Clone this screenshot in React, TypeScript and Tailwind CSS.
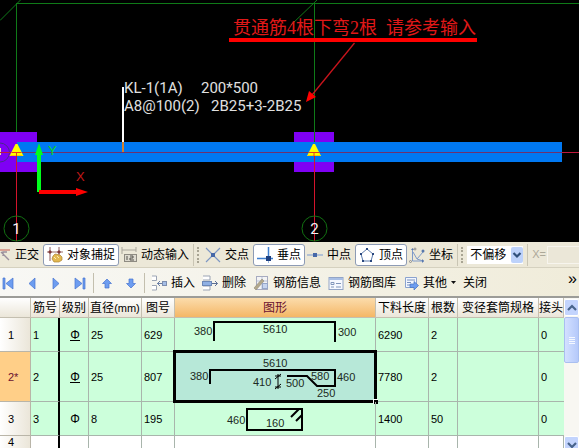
import type { ReactNode } from "react";

const UI_FONT = "font-['Liberation_Sans','Noto_Sans_CJK_SC',sans-serif]";

/* ---------- drawing area ---------- */

function AxisBubble({ x, label }: { x: number; label: string }) {
  return (
    <g>
      <line x1={x} x2={x} y1="152" y2="241" stroke="#d4142c" />
      <circle cx={x} cy="228.5" r="12.5" fill="none" stroke="#127012" />
      <text x={x} y="234" fontSize="15" fill="#f2f2f2" textAnchor="middle" className="font-[Roboto,sans-serif]">
        {label}
      </text>
    </g>
  );
}

function Support({ x }: { x: number }) {
  return (
    <g>
      <path d={`M${x - 7} 156 L${x - 1} 144 H${x + 1} L${x + 7} 156 Z`} fill="#ffff00" />
      <path d={`M${x - 6} 155.5 H${x + 6}`} stroke="#ffc800" />
      <path d={`M${x - 5} 152.5 H${x + 5} M${x} 152 V156`} stroke="#e04020" />
    </g>
  );
}

function BeamCanvas() {
  return (
    <svg className="block h-[242px] w-full shrink-0 bg-black" role="img" aria-label="梁平面图">
      <g stroke="#0f7a18" fill="none">
        <path d="M0 20.5 L20.5 0" />
        <path d="M291 25 L317 0" />
        <line x1="17" x2="100%" y1="3.5" y2="3.5" />
        <line x1="16.5" x2="16.5" y1="3" y2="146" />
        <line x1="314.5" x2="314.5" y1="3" y2="146" />
      </g>
      <g fill="#7f00f4">
        <rect x="0" y="132" width="37" height="40" />
        <rect x="294" y="132" width="40" height="40" />
      </g>
      <rect x="17" y="142" width="545" height="20" fill="#0078f2" />
      <circle cx="0" cy="152.5" r="9.5" fill="none" stroke="#4a2a8a" />
      <rect x="0" y="148" width="1" height="7" fill="#e8e0a0" />
      <line x1="0" x2="100%" y1="152.5" y2="152.5" stroke="#c0183c" />
      <line x1="17" x2="562" y1="152.5" y2="152.5" stroke="#70306c" />
      <line x1="314.5" x2="314.5" y1="132" y2="142" stroke="#0f7a18" />
      <AxisBubble x={16.5} label="1" />
      <AxisBubble x={314.5} label="2" />
      <Support x={16.5} />
      <Support x={314} />

      <rect x="122" y="87" width="2" height="55" fill="#fff" />
      <rect x="122" y="142" width="2" height="10" fill="#d08030" />
      <g fontSize="15" fill="#e0e0e0" className="font-[Roboto,sans-serif]">
        <text x="124" y="93">KL-1(1A)</text>
        <text x="201" y="93">200*500</text>
        <text x="124" y="111">A8@100(2)</text>
        <text x="211" y="111">2B25+3-2B25</text>
      </g>

      <rect x="37" y="154" width="4" height="38" fill="#00ff1c" />
      <path d="M39 143 L43 155 H35 Z" fill="#00ff1c" />
      <rect x="39" y="190" width="38" height="4" fill="#f00" />
      <path d="M88 192 L76 188 V196 Z" fill="#f00" />
      <g fontSize="13" className="font-['Liberation_Sans',sans-serif]">
        <text x="48" y="155" fill="#10d820">Y</text>
        <text x="76" y="181" fill="#c01818">X</text>
      </g>

      <text y="34" fontSize="18" fill="#e01818" className="font-['Liberation_Serif','Noto_Sans_CJK_SC',serif]">
        <tspan x="233">贯通筋4根下弯2根 </tspan>
        <tspan x="386">请参考输入</tspan>
      </text>
      <rect x="229" y="38" width="248" height="4" fill="#f00" />
      <path d="M354.5 43 L312 95" stroke="#c8141c" strokeWidth="1.3" />
      <path d="M306 102 L309 91 L316 97 Z" fill="#f00" />
    </svg>
  );
}

/* ---------- toolbars ---------- */

function Icon({ children }: { children: ReactNode }) {
  return (
    <svg className="h-4 w-4 shrink-0" viewBox="0 0 16 16" fill="none" aria-hidden="true">
      {children}
    </svg>
  );
}

function SnapButton({ label, icon, pressed = false }: { label: string; icon: ReactNode; pressed?: boolean }) {
  return (
    <button
      type="button"
      aria-pressed={pressed}
      className={
        pressed
          ? "ml-[2px] flex h-[22px] shrink-0 items-center gap-1 rounded-[3px] border border-[#8d9bb5] bg-white px-[3px] whitespace-nowrap"
          : "flex h-[22px] shrink-0 items-center gap-1 px-[2px] whitespace-nowrap"
      }
    >
      <Icon>{icon}</Icon>
      {label}
    </button>
  );
}

function Grip() {
  return (
    <div className="mr-1 ml-[2px] flex h-[22px] shrink-0 items-center border-l border-[#c9c5b4] pl-[3px]">
      <div className="h-4 w-[2px] border-l-2 border-dotted border-[#a8a493]" />
    </div>
  );
}

function SnapToolbar() {
  return (
    <div className="flex h-[26px] shrink-0 items-center overflow-hidden border-b border-[#d5d1bf] bg-[#ece8d8]">
      <div className="-ml-[7px] flex shrink-0">
        <SnapButton
          label="正交"
          icon={
            <>
              <path d="M3 3H15" stroke="#d9a294" strokeWidth="2" />
              <path d="M6 5L14 13M8 9V5H12" stroke="#9a8f9c" strokeWidth="1.4" />
            </>
          }
        />
        <SnapButton
          label="对象捕捉"
          pressed
          icon={
            <>
              <path d="M3 0V14M12 0V8" stroke="#8c5a5a" />
              <path d="M0 5H16" stroke="#9c7068" />
              <path d="M1 5L3 3L5 5L3 7ZM10 5L12 3L14 5L12 7Z" fill="#803838" />
              <path d="M6 9L8 7L13 8L15 10V13L12 15H7L5 12Z" fill="#e2b850" stroke="#ae8434" strokeWidth=".7" />
              <path d="M7 10L9 12M10 9L12 11" stroke="#fff0b0" />
            </>
          }
        />
        <SnapButton
          label="动态输入"
          icon={
            <>
              <path d="M1 0V7M15 0V5M1 3H15" stroke="#a9a69b" />
              <rect x="3.5" y="7.5" width="12" height="7" fill="#dedbd0" stroke="#8e8b82" />
              <path d="M6 9V13M9 9H12V11H9V13H13" stroke="#55534d" />
            </>
          }
        />
      </div>
      <Grip />
      <SnapButton
        label="交点"
        icon={
          <>
            <path d="M1 1L15 15M15 1L1 15" stroke="#7d97c4" strokeWidth="1.2" />
            <rect x="6" y="6" width="4" height="4" fill="#4668a8" />
          </>
        }
      />
      <SnapButton
        label="垂点"
        pressed
        icon={
          <>
            <path d="M0 11.5H16M11.5 0V11" stroke="#3f7fd0" strokeWidth="1.5" />
            <path d="M11.5 11V16" stroke="#9ab8e0" />
            <rect x="9" y="9" width="5" height="5" fill="#1d3f80" />
          </>
        }
      />
      <SnapButton
        label="中点"
        icon={
          <>
            <path d="M0 8H16" stroke="#9fb4d4" strokeWidth="1.5" />
            <rect x="6" y="6" width="4" height="4" fill="#4668a8" />
          </>
        }
      />
      <SnapButton
        label="顶点"
        pressed
        icon={
          <>
            <path d="M8 2L14 7L12 14H4L2 7Z" stroke="#5c7cae" />
            <path d="M7 1h2v2H7zM13 6h2v2h-2zM11 13h2v2h-2zM3 13h2v2H3zM1 6h2v2H1z" fill="#29477e" />
          </>
        }
      />
      <SnapButton
        label="坐标"
        icon={
          <>
            <path d="M3.5 3V14H15" stroke="#7e9ac8" />
            <path d="M4 5L8 12L14 5M8 12L14 14" stroke="#7e9ac8" />
            <path d="M2 3l1.5-2L5 3zM13 12l2 2-2 2z" fill="#5777ac" />
            <circle cx="14" cy="4" r="1.5" fill="#5777ac" />
            <circle cx="1.5" cy="14.5" r="1" stroke="#8c8c8c" />
            <circle cx="6" cy="2" r="1" stroke="#8c8c8c" />
          </>
        }
      />
      <Grip />
      <div className="relative h-[18px] w-14 shrink-0 bg-white">
        <select aria-label="偏移方式" className="h-full w-full appearance-none bg-transparent pl-[3px] leading-4">
          <option>不偏移</option>
        </select>
        <svg
          className="pointer-events-none absolute top-px right-0 h-4 w-3 rounded-[2px] bg-[#bdd2fb]"
          viewBox="0 0 12 16"
          fill="none"
          aria-hidden="true"
        >
          <path d="M2.5 6L6 9.5L9.5 6" stroke="#30507c" strokeWidth="2.2" />
        </svg>
      </div>
      <div className="ml-1 h-[22px] shrink-0 border-l border-[#c9c5b4]" />
      <label htmlFor="offset-x" className="w-[15px] shrink-0 pl-1 text-[11px] text-[#aca899]">
        X=
      </label>
      <input
        id="offset-x"
        type="text"
        disabled
        className="ml-1 h-[18px] w-7 min-w-0 flex-1 border border-r-0 border-[#f7f5ee] bg-[#ebe7d8]"
      />
    </div>
  );
}

function NavButton({ label, path }: { label: string; path: string }) {
  return (
    <button type="button" aria-label={label} className="flex h-6 w-6 shrink-0 items-center justify-center">
      <Icon>
        <path d={path} fill="#6d9df0" stroke="#4673d0" strokeWidth=".7" />
      </Icon>
    </button>
  );
}

function EditButton({ label, icon, menu = false }: { label: string; icon?: ReactNode; menu?: boolean }) {
  return (
    <button type="button" className="flex h-6 shrink-0 items-center gap-1 px-[3px] whitespace-nowrap">
      {icon && <Icon>{icon}</Icon>}
      {label}
      {menu && (
        <svg className="h-[3px] w-[5px]" viewBox="0 0 5 3" aria-hidden="true">
          <path d="M0 0H5L2.5 3Z" fill="#111" />
        </svg>
      )}
    </button>
  );
}

function Divider() {
  return <div className="mx-px h-5 w-px shrink-0 bg-[#c3bfae]" />;
}

function EditToolbar() {
  return (
    <div className="flex h-7 shrink-0 items-center overflow-hidden bg-linear-to-r from-[#f8f8f5] to-[#f0ecda] pt-px">
      <div className="-ml-1 flex shrink-0">
        <NavButton label="第一条" path="M3 3H5V14H3ZM13 3V14L6 8.5Z" />
        <NavButton label="上一条" path="M11 3V14L5 8.5Z" />
        <NavButton label="下一条" path="M5 3V14L11 8.5Z" />
        <NavButton label="最后一条" path="M3 3V14L10 8.5ZM11 3H13V14H11Z" />
      </div>
      <Divider />
      <NavButton label="上移" path="M8 4L12.500 8.500H10V13H6V8.500H3.500Z" />
      <NavButton label="下移" path="M8 13L12.500 8.500H10V4H6V8.500H3.500Z" />
      <Divider />
      <div className="ml-[2px] flex min-w-0 gap-px">
        <EditButton
          label="插入"
          icon={
            <>
              <path d="M1 1H5.500V5.500H1M1 10.500H5.500V15H1" fill="#fff" stroke="#9ba4b4" />
              <path d="M6 8.500H12M9 6L6.500 8.500L9 11" stroke="#6b7fa6" />
              <rect x="11.500" y="6.500" width="4" height="4" fill="#a5bee6" stroke="#7e8eae" />
            </>
          }
        />
        <EditButton
          label="删除"
          icon={
            <>
              <path d="M1 1H8V5H1M1 11H8V15H1" fill="#fff" stroke="#9ba4b4" />
              <rect x=".5" y="6.500" width="9" height="4" fill="#8fb0e4" stroke="#6c88b8" />
              <path d="M10 8.500H15.500M13 6L15.500 8.500L13 11" stroke="#5c6f94" />
            </>
          }
        />
        <EditButton
          label="钢筋信息"
          icon={
            <>
              <rect x="3.500" y="1.500" width="11" height="13" fill="#f4f4f4" stroke="#a7abc0" />
              <path d="M4 6H14M9 2V14" stroke="#b8c4dc" />
              <path d="M1 13L9 4L11 6L3 15Z" fill="#b2a88c" stroke="#918a78" strokeWidth=".6" />
              <rect x="9.500" y="8.500" width="5" height="5" fill="#c6d4ee" stroke="#96a6c8" />
            </>
          }
        />
        <EditButton
          label="钢筋图库"
          icon={
            <>
              <rect x="1" y="2.500" width="14" height="12" fill="#f6f9ff" stroke="#93a5c6" />
              <path d="M1 4H15" stroke="#a9bfe5" strokeWidth="2" />
              <path d="M3 7.500H6V9.500H3ZM8 8.500H13M3 12H6M8 12H13" stroke="#8297bb" />
            </>
          }
        />
        <EditButton
          label="其他"
          menu
          icon={
            <>
              <path d="M2.500 2.500H13.500V12.500H2.500Z" fill="#f3f7ff" stroke="#8ba3cf" />
              <path d="M4 5H12M4 7.500H8M4 10H7" stroke="#7890bd" />
              <path d="M7 9H11V6.500L15.500 10.500L11 15V12.500H7Z" fill="#6d9df0" stroke="#4673c0" strokeWidth=".7" />
            </>
          }
        />
        <EditButton label="关闭" />
      </div>
      <button type="button" aria-label="更多" className="mr-[2px] mb-2 ml-auto shrink-0 text-base leading-4">
        »
      </button>
    </div>
  );
}

/* ---------- rebar table ---------- */

function Shape({ height, path, children }: { height: number; path: string; children: ReactNode }) {
  return (
    <svg width="200" height={height} className="block" fontSize="11" fill="#1c2a22">
      <path d={path} fill="none" stroke="#000" strokeWidth="2" />
      {children}
    </svg>
  );
}

const shapes: Record<string, ReactNode> = {
  "629": (
    <Shape height={33} path="M39 23V4H160V24">
      <text x="19" y="17">380</text>
      <text x="88" y="15">5610</text>
      <text x="163" y="18">300</text>
    </Shape>
  ),
  "807": (
    <Shape height={49} path="M35 32V18H160V34H142L132 24H112">
      <text x="88" y="15">5610</text>
      <text x="15" y="28">380</text>
      <text x="78" y="34">410</text>
      <text x="111" y="35">500</text>
      <text x="136" y="28">580</text>
      <text x="162" y="29">460</text>
      <text x="142" y="45">250</text>
      <path d="M103 22V37M100 24H106M100 35H106M100 27L106 22M100 37L106 32" stroke="#000" />
    </Shape>
  ),
  "195": (
    <Shape height={33} path="M72 7H127V28H72ZM116 15L124 7M121 19L127 13">
      <text x="52" y="22">460</text>
      <text x="91" y="25">160</text>
    </Shape>
  ),
};

type Row = {
  no: string;
  grade: "I" | "II";
  diameter: string;
  figure: string;
  length: string;
  count: string;
  heightClass: string;
  selected?: boolean;
};

const rows: Row[] = [
  { no: "1", grade: "II", diameter: "25", figure: "629", length: "6290", count: "2", heightClass: "h-[34px]" },
  { no: "2", grade: "II", diameter: "25", figure: "807", length: "7780", count: "2", heightClass: "h-[50px]", selected: true },
  { no: "3", grade: "I", diameter: "8", figure: "195", length: "1400", count: "50", heightClass: "h-[34px]" },
];

const columns = [
  { label: "", width: "w-[31px]" },
  { label: "筋号", width: "w-[29px]" },
  { label: "级别", width: "w-[29px]" },
  { label: "直径(mm)", width: "w-[53px]" },
  { label: "图号", width: "w-[33px]" },
  { label: "图形", width: "w-[201px]" },
  { label: "下料长度", width: "w-[53px]" },
  { label: "根数", width: "w-[29px]" },
  { label: "变径套筒规格", width: "w-[81px]" },
  { label: "接头", width: "" },
];

const CELL = "border-r border-b border-[#a9b5ac] p-0 pl-[2px]";
const FROZEN = "border-r-2 border-b border-r-black border-b-[#a9b5ac] p-0 pl-[2px]";
const ROW_HEAD = "border-r border-b border-[#b9b5a8] p-0 pl-2 text-left font-normal";

function RebarTable() {
  return (
    <table className="min-w-0 flex-1 table-fixed border-separate border-spacing-0 text-[11px] leading-3">
      <thead>
        <tr className="h-5 text-xs leading-4">
          {columns.map((c) => (
            <th
              key={c.label}
              scope="col"
              className={`${c.width} overflow-hidden border-r border-b border-[#c4bfb0] p-0 font-normal whitespace-nowrap ${
                c.label === "图形"
                  ? "bg-linear-to-b from-[#fbdcab] to-[#f4b765] text-[#6a1030]"
                  : "bg-linear-to-b from-white to-[#ebe6d9]"
              }`}
            >
              {c.label === "直径(mm)" ? (
                <>
                  直径<span className="text-[11px]">(mm)</span>
                </>
              ) : (
                c.label
              )}
            </th>
          ))}
        </tr>
      </thead>
      <tbody>
        {rows.map((r) => (
          <tr key={r.no} className={`${r.heightClass} bg-[#ccffdb]`}>
            <th
              scope="row"
              className={`${ROW_HEAD} ${
                r.selected ? "bg-[#ffcf88] text-[#6a1030]" : "bg-linear-to-r from-white to-[#ebe6d9]"
              }`}
            >
              {r.selected ? `${r.no}*` : r.no}
            </th>
            <td className={FROZEN}>{r.no}</td>
            <td className={`${CELL} text-center text-xs`}>
              <span className={r.grade === "II" ? "inline-block h-[11px] border-b border-black leading-[11px]" : ""}>Φ</span>
            </td>
            <td className={CELL}>{r.diameter}</td>
            <td className={CELL}>{r.figure}</td>
            <td className={`relative border-r border-b border-[#a9b5ac] p-0 ${r.selected ? "bg-[#b7e8d8]" : ""}`}>
              {shapes[r.figure]}
              {r.selected && (
                <>
                  <div className="absolute -inset-x-[2px] -inset-y-[2px] border-[3px] border-black" />
                  <div className="absolute -right-[3px] -bottom-[3px] h-[5px] w-[5px] border-t border-l border-white bg-black" />
                </>
              )}
            </td>
            <td className={CELL}>{r.length}</td>
            <td className={CELL}>{r.count}</td>
            <td className={CELL} />
            <td className="border-b border-[#a9b5ac] p-0 pl-[2px]">0</td>
          </tr>
        ))}
        <tr className="h-[17px]">
          <th scope="row" className={`${ROW_HEAD} bg-linear-to-r from-white to-[#ebe6d9] align-top`}>
            4
          </th>
          <td className={FROZEN} />
          {columns.slice(2).map((c) => (
            <td key={c.label} className={CELL} />
          ))}
        </tr>
      </tbody>
    </table>
  );
}

function ScrollArrow({ label, path }: { label: string; path: string }) {
  return (
    <button
      type="button"
      aria-label={label}
      className="flex h-[17px] shrink-0 items-center justify-center rounded-[2px] border border-white bg-[#c3d4fd]"
    >
      <svg className="h-2 w-[10px]" viewBox="0 0 10 8" fill="none" aria-hidden="true">
        <path d={path} stroke="#48648c" strokeWidth="2.2" />
      </svg>
    </button>
  );
}

function ScrollBar() {
  return (
    <div className="flex w-[15px] shrink-0 flex-col bg-[#f8f7f2] pt-px">
      <ScrollArrow label="向上滚动" path="M1 6L5 2L9 6" />
      <div className="mt-px flex h-[46px] flex-col items-center justify-center gap-px rounded-[2px] border border-[#a9bff0] bg-linear-to-r from-[#d3e0ff] to-[#b5c9fa]">
        {["a", "b", "c", "d"].map((k) => (
          <div key={k} className="h-px w-[6px] bg-[#f4f8ff]" />
        ))}
      </div>
      <div className="flex-1" />
      <ScrollArrow label="向下滚动" path="M1 2L5 6L9 2" />
    </div>
  );
}

export default function App() {
  return (
    <div className={`flex h-screen flex-col overflow-hidden bg-white text-xs text-black ${UI_FONT}`}>
      <BeamCanvas />
      <SnapToolbar />
      <EditToolbar />
      <div className="min-h-0 flex-1 overflow-hidden border-t-2 border-[#9c9c98]">
        <div className="flex">
          <RebarTable />
          <ScrollBar />
        </div>
      </div>
    </div>
  );
}
